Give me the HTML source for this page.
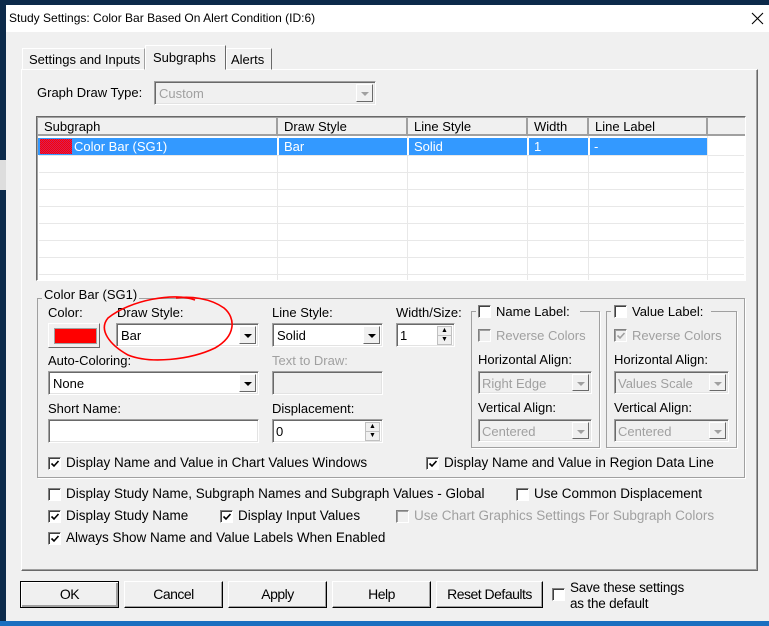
<!DOCTYPE html>
<html><head><meta charset="utf-8"><style>
*{box-sizing:border-box;margin:0;padding:0}
body{width:769px;height:626px;overflow:hidden;background:#0c2a4a;font-family:"Liberation Sans",sans-serif;font-size:13px;color:#000;position:relative}
.a{position:absolute;white-space:nowrap}
.win{position:absolute;left:6px;top:5px;width:763px;height:616px;background:#f0f0f0}
.title{position:absolute;left:6px;top:5px;width:763px;height:27px;background:#fff}
.sunk{position:absolute;background:#fff;border:1px solid;border-color:#a0a0a0 #fff #fff #a0a0a0;box-shadow:inset 1px 1px 0 #696969,inset -1px -1px 0 #e3e3e3}
.dis{background:#f0f0f0}
.arrow{position:absolute;right:2px;top:2px;bottom:2px;width:17px;background:#f0f0f0;border:1px solid;border-color:#fff #696969 #696969 #fff}
.arrow:after{content:"";position:absolute;left:4px;top:7px;border:4px solid transparent;border-top:4px solid #000;border-bottom:0}
.arrow.g:after{border-top-color:#a0a0a0}
.cb{position:absolute;width:13px;height:13px;background:#fff;border:1px solid;border-color:#808080 #fff #fff #808080;box-shadow:inset 1px 1px 0 #404040}
.cb.g{background:#f0f0f0;box-shadow:inset 1px 1px 0 #a0a0a0}
.cb svg{position:absolute;left:1px;top:1px}
.btn{position:absolute;height:27px;top:581px;background:#f0f0f0;border:1px solid;border-color:#fff #000 #000 #fff;box-shadow:inset -1px -1px 0 #a0a0a0;text-align:center;line-height:25px;font-size:14px;letter-spacing:-0.5px}
.grp{position:absolute;border:1px solid #a0a0a0;box-shadow:1px 1px 0 #fff}
.gray{color:#a0a0a0}
.hdr{position:absolute;top:118px;height:18px;border-right:2px solid #a0a0a0;border-bottom:2px solid #a0a0a0;background:#f0f0f0;padding-left:6px;line-height:17px}
.hl{position:absolute;left:39px;width:705px;height:1px;background:#e8e8e8}
.sp{position:absolute;right:2px;width:15px;height:10px;background:#f0f0f0;border:1px solid #c0c0c0;font-size:7px;text-align:center;line-height:8px}
.t14{font-size:13.5px}
</style></head><body>
<div class="win"></div>
<div class="a" style="left:0;top:160px;width:6px;height:30px;background:#ddd"></div>
<div class="title"></div>
<div class="a" style="left:9px;top:11px;font-size:12px">Study Settings: Color Bar Based On Alert Condition (ID:6)</div>
<svg class="a" style="left:751px;top:12px" width="13" height="13"><path d="M1 1L12 12M12 1L1 12" stroke="#000" stroke-width="1.1"/></svg>

<div class="a" style="left:21px;top:69px;width:737px;height:502px;border:1px solid;border-color:#fff #696969 #696969 #fff;box-shadow:inset -1px -1px 0 #a0a0a0"></div>
<div class="a" style="left:22px;top:48px;width:123px;height:22px;border:1px solid;border-color:#fff #a0a0a0 transparent #fff;padding:3px 0 0 6px">Settings and Inputs</div>
<div class="a" style="left:145px;top:45px;width:81px;height:25px;border:1px solid;border-color:#fff #696969 transparent #fff;background:#f0f0f0;padding:4px 0 0 7px">Subgraphs</div>
<div class="a" style="left:226px;top:48px;width:46px;height:22px;border:1px solid;border-color:#fff #696969 transparent #fff;padding:3px 0 0 4px">Alerts</div>

<div class="a" style="left:37px;top:85px">Graph Draw Type:</div>
<div class="sunk dis" style="left:154px;top:81px;width:222px;height:24px"><span class="a gray" style="left:4px;top:4px">Custom</span><div class="arrow g"></div></div>

<div class="a" style="left:36px;top:116px;width:710px;height:165px;background:#fff;border:1px solid;border-color:#696969 #fff #fff #696969;box-shadow:inset 1px 1px 0 #a0a0a0"></div>
<div class="hdr" style="left:38px;width:240px">Subgraph</div>
<div class="hdr" style="left:278px;width:130px">Draw Style</div>
<div class="hdr" style="left:408px;width:120px">Line Style</div>
<div class="hdr" style="left:528px;width:61px">Width</div>
<div class="hdr" style="left:589px;width:119px">Line Label</div>
<div class="hdr" style="left:708px;width:37px;border-right:0"></div>
<div class="a" style="left:38px;top:138px;width:670px;height:17px;background:#3399ff"></div>
<div class="a" style="left:40px;top:139px;width:32px;height:15px;background:repeating-conic-gradient(#ff0000 0 25%,#d02060 0 50%) 0 0/2px 2px"></div>
<div class="a" style="left:74px;top:139px;color:#fff">Color Bar (SG1)</div>
<div class="a" style="left:284px;top:139px;color:#fff">Bar</div>
<div class="a" style="left:414px;top:139px;color:#fff">Solid</div>
<div class="a" style="left:534px;top:139px;color:#fff">1</div>
<div class="a" style="left:594px;top:139px;color:#fff">-</div>
<div class="a" style="left:277px;top:136px;width:1px;height:144px;background:#e8e8e8"></div>
<div class="a" style="left:407px;top:136px;width:1px;height:144px;background:#e8e8e8"></div>
<div class="a" style="left:527px;top:136px;width:1px;height:144px;background:#e8e8e8"></div>
<div class="a" style="left:588px;top:136px;width:1px;height:144px;background:#e8e8e8"></div>
<div class="a" style="left:707px;top:136px;width:1px;height:144px;background:#e8e8e8"></div>
<div class="a" style="left:277px;top:138px;width:2px;height:17px;background:#fff"></div>
<div class="a" style="left:407px;top:138px;width:2px;height:17px;background:#fff"></div>
<div class="a" style="left:527px;top:138px;width:2px;height:17px;background:#fff"></div>
<div class="a" style="left:588px;top:138px;width:2px;height:17px;background:#fff"></div>
<div class="hl" style="top:155px"></div><div class="hl" style="top:172px"></div><div class="hl" style="top:189px"></div><div class="hl" style="top:206px"></div><div class="hl" style="top:223px"></div><div class="hl" style="top:240px"></div><div class="hl" style="top:257px"></div><div class="hl" style="top:274px"></div>

<div class="grp" style="left:37px;top:298px;width:708px;height:180px"></div>
<div class="a" style="left:42px;top:287px;background:#f0f0f0;padding:0 2px">Color Bar (SG1)</div>
<div class="a" style="left:48px;top:305px">Color:</div>
<div class="a" style="left:48px;top:323px;width:52px;height:25px;border:1px solid;border-color:#fff #696969 #696969 #fff"><div class="a" style="left:5px;top:4px;width:43px;height:16px;background:#f00;border:1px solid #a0a0a0"></div></div>
<div class="a" style="left:117px;top:305px">Draw Style:</div>
<div class="sunk" style="left:116px;top:323px;width:143px;height:24px"><span class="a" style="left:4px;top:4px">Bar</span><div class="arrow"></div></div>
<div class="a" style="left:272px;top:305px">Line Style:</div>
<div class="sunk" style="left:272px;top:323px;width:111px;height:24px"><span class="a" style="left:4px;top:4px">Solid</span><div class="arrow"></div></div>
<div class="a" style="left:396px;top:305px">Width/Size:</div>
<div class="sunk" style="left:396px;top:323px;width:59px;height:24px"><span class="a" style="left:3px;top:4px">1</span><div class="sp" style="top:2px">▲</div><div class="sp" style="top:11px">▼</div></div>
<div class="a" style="left:48px;top:353px">Auto-Coloring:</div>
<div class="sunk" style="left:48px;top:371px;width:211px;height:24px"><span class="a" style="left:4px;top:4px">None</span><div class="arrow"></div></div>
<div class="a gray" style="left:272px;top:353px">Text to Draw:</div>
<div class="sunk dis" style="left:272px;top:371px;width:111px;height:24px"></div>
<div class="a" style="left:48px;top:401px">Short Name:</div>
<div class="sunk" style="left:48px;top:419px;width:211px;height:24px"></div>
<div class="a" style="left:272px;top:401px">Displacement:</div>
<div class="sunk" style="left:272px;top:419px;width:111px;height:24px"><span class="a" style="left:3px;top:4px">0</span><div class="sp" style="top:2px">▲</div><div class="sp" style="top:11px">▼</div></div>

<div class="grp" style="left:471px;top:311px;width:129px;height:137px"></div>
<div class="a" style="left:476px;top:303px;width:104px;height:16px;background:#f0f0f0"></div>
<div class="cb" style="left:478px;top:305px"></div><div class="a" style="left:496px;top:304px">Name Label:</div>
<div class="cb g" style="left:478px;top:329px"></div><div class="a gray" style="left:496px;top:328px">Reverse Colors</div>
<div class="a" style="left:478px;top:352px">Horizontal Align:</div>
<div class="sunk dis" style="left:478px;top:371px;width:114px;height:23px"><span class="a gray" style="left:3px;top:4px">Right Edge</span><div class="arrow g"></div></div>
<div class="a" style="left:478px;top:400px">Vertical Align:</div>
<div class="sunk dis" style="left:478px;top:419px;width:114px;height:23px"><span class="a gray" style="left:3px;top:4px">Centered</span><div class="arrow g"></div></div>

<div class="grp" style="left:606px;top:311px;width:131px;height:137px"></div>
<div class="a" style="left:611px;top:303px;width:100px;height:16px;background:#f0f0f0"></div>
<div class="cb" style="left:614px;top:305px"></div><div class="a" style="left:632px;top:304px">Value Label:</div>
<div class="cb g" style="left:614px;top:329px"><svg width="10" height="10"><path d="M1.5 4.5L4 7L8.5 2" fill="none" stroke="#a0a0a0" stroke-width="1.6"/></svg></div><div class="a gray" style="left:632px;top:328px">Reverse Colors</div>
<div class="a" style="left:614px;top:352px">Horizontal Align:</div>
<div class="sunk dis" style="left:614px;top:371px;width:115px;height:23px"><span class="a gray" style="left:3px;top:4px">Values Scale</span><div class="arrow g"></div></div>
<div class="a" style="left:614px;top:400px">Vertical Align:</div>
<div class="sunk dis" style="left:614px;top:419px;width:115px;height:23px"><span class="a gray" style="left:3px;top:4px">Centered</span><div class="arrow g"></div></div>

<div class="cb" style="left:48px;top:457px"><svg width="10" height="10"><path d="M1.5 4.5L4 7L8.5 2" fill="none" stroke="#000" stroke-width="1.6"/></svg></div><div class="a t14" style="left:66px;top:455px">Display Name and Value in Chart Values Windows</div>
<div class="cb" style="left:426px;top:457px"><svg width="10" height="10"><path d="M1.5 4.5L4 7L8.5 2" fill="none" stroke="#000" stroke-width="1.6"/></svg></div><div class="a t14" style="left:444px;top:455px">Display Name and Value in Region Data Line</div>

<div class="cb" style="left:48px;top:488px"></div><div class="a t14" style="left:66px;top:486px">Display Study Name, Subgraph Names and Subgraph Values - Global</div>
<div class="cb" style="left:516px;top:488px"></div><div class="a t14" style="left:534px;top:486px">Use Common Displacement</div>
<div class="cb" style="left:48px;top:510px"><svg width="10" height="10"><path d="M1.5 4.5L4 7L8.5 2" fill="none" stroke="#000" stroke-width="1.6"/></svg></div><div class="a t14" style="left:66px;top:508px">Display Study Name</div>
<div class="cb" style="left:220px;top:510px"><svg width="10" height="10"><path d="M1.5 4.5L4 7L8.5 2" fill="none" stroke="#000" stroke-width="1.6"/></svg></div><div class="a t14" style="left:238px;top:508px">Display Input Values</div>
<div class="cb g" style="left:396px;top:510px"></div><div class="a t14 gray" style="left:414px;top:508px">Use Chart Graphics Settings For Subgraph Colors</div>
<div class="cb" style="left:48px;top:532px"><svg width="10" height="10"><path d="M1.5 4.5L4 7L8.5 2" fill="none" stroke="#000" stroke-width="1.6"/></svg></div><div class="a t14" style="left:66px;top:530px">Always Show Name and Value Labels When Enabled</div>

<div class="btn" style="left:20px;width:99px;border:1px solid #000;box-shadow:inset 1px 1px 0 #fff,inset -2px -2px 0 #a0a0a0">OK</div>
<div class="btn" style="left:124px;width:99px">Cancel</div>
<div class="btn" style="left:228px;width:99px">Apply</div>
<div class="btn" style="left:332px;width:99px">Help</div>
<div class="btn" style="left:436px;width:107px">Reset Defaults</div>
<div class="cb" style="left:552px;top:588px"></div>
<div class="a" style="left:570px;top:580px;line-height:16px;font-size:13.5px;letter-spacing:-0.2px">Save these settings<br>as the default</div>
<div class="a" style="left:0;top:621px;width:769px;height:5px;background:#1a6fc0"></div>

<svg class="a" style="left:0;top:0" width="769" height="626"><path d="M195 300 C175 292 130 300 108 318 C98 330 110 345 128 355 C150 364 190 360 215 348 C236 336 236 318 224 308 C210 298 190 296 176 298" fill="none" stroke="#ff0000" stroke-width="1.6"/></svg>
</body></html>
